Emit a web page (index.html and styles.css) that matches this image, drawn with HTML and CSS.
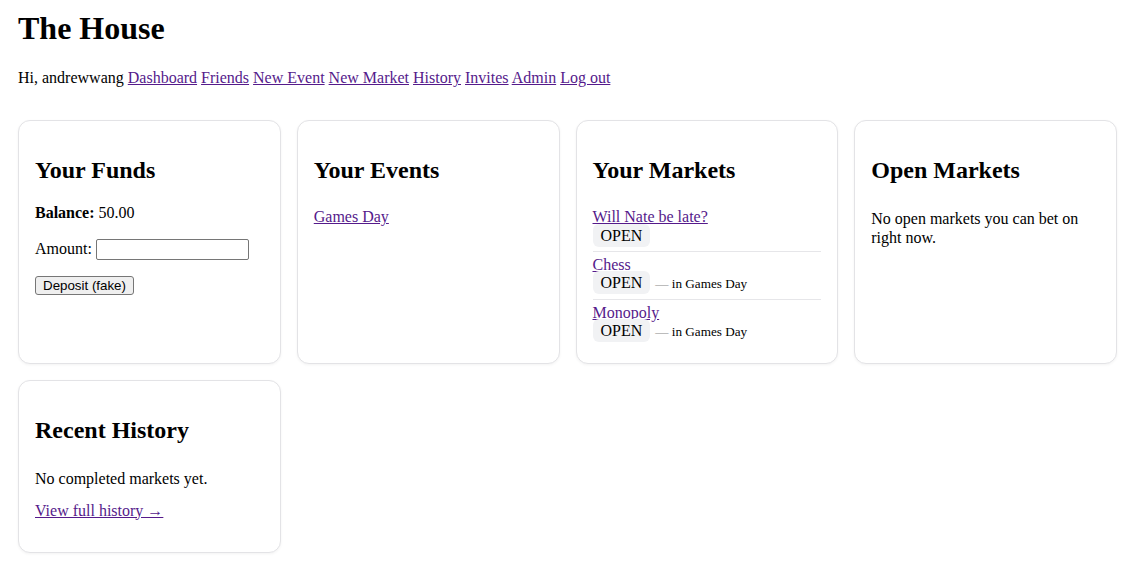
FILE: index.html
```html
<!DOCTYPE html>
<html lang="en">
<head>
<meta charset="utf-8">
<title>The House</title>
<link rel="stylesheet" href="styles.css">
</head>
<body>
<header class="site-header">
  <h1 class="site-title">The House</h1>
  <p class="nav">Hi, andrewwang <a href="#">Dashboard</a> <a href="#">Friends</a> <a href="#">New Event</a> <a href="#">New Market</a> <a href="#">History</a> <a href="#">Invites</a> <a href="#">Admin</a> <a href="#">Log out</a></p>
</header>
<main class="grid">
  <section class="card">
    <h2>Your Funds</h2>
    <p><strong>Balance:</strong> 50.00</p>
    <p>Amount: <input class="amount" type="text"></p>
    <p><button class="btn" type="button">Deposit (fake)</button></p>
  </section>
  <section class="card">
    <h2>Your Events</h2>
    <ul class="list">
      <li><a href="#">Games Day</a></li>
    </ul>
  </section>
  <section class="card">
    <h2>Your Markets</h2>
    <ul class="list">
      <li><a href="#">Will Nate be late?</a><br><span class="badge">OPEN</span></li>
      <li><a href="#">Chess</a><br><span class="badge">OPEN</span> <small class="meta"><span class="dash">—</span> in Games Day</small></li>
      <li><a href="#">Monopoly</a><br><span class="badge">OPEN</span> <small class="meta"><span class="dash">—</span> in Games Day</small></li>
    </ul>
  </section>
  <section class="card">
    <h2>Open Markets</h2>
    <p class="empty">No open markets you can bet on right now.</p>
  </section>
  <section class="card">
    <h2>Recent History</h2>
    <p class="empty">No completed markets yet.</p>
    <p class="more"><a href="#">View full history →</a></p>
  </section>
</main>
</body>
</html>
```
FILE: styles.css
```css
html, body {
  background: #fff;
}
body {
  margin: 0;
  padding: 10px 11px 14px 18px;
  font-family: "Liberation Serif", "Times New Roman", serif;
  font-size: 16px;
  line-height: 1.15;
  color: #000;
}
a {
  color: #551a8b;
}
.site-title {
  font-size: 32px;
  font-weight: bold;
  margin: 0 0 22.4px;
}
.nav {
  margin: 0;
}
.grid {
  display: grid;
  grid-template-columns: repeat(4, 1fr);
  gap: 16px;
  margin-top: 32px;
}
.card {
  border: 1px solid #e3e3e6;
  border-radius: 12px;
  padding: 16px;
  box-shadow: 0 1px 3px rgba(0, 0, 0, 0.05);
  background: #fff;
}
.card h2 {
  font-size: 24px;
  font-weight: bold;
  margin: 20px 0;
}
.card p {
  margin: 16px 0;
}
.list {
  list-style: none;
  margin: 0;
  padding: 0;
}
.list li {
  padding: 4px 0 6px;
  border-bottom: 1px solid #e6e6e9;
}
.list li:last-child {
  border-bottom: none;
}
.badge {
  background: #f1f2f4;
  border-radius: 6px;
  padding: 3px 8px;
}
.meta {
  font-size: 13.2px;
  margin-left: 1px;
}
.dash {
  color: #888;
}
.card p.empty {
  margin: 0;
  padding-top: 6px;
}
.card p.more {
  margin: 13px 0 16px;
}
.amount {
  box-sizing: border-box;
  width: 153px;
  height: 21px;
  padding: 1px 3px;
  border: 1px solid #767676;
  border-radius: 2px;
  font-family: "Liberation Sans", Arial, sans-serif;
  font-size: 13.33px;
  vertical-align: baseline;
}
.btn {
  font-family: "Liberation Sans", Arial, sans-serif;
  font-size: 13.33px;
  line-height: normal;
  padding: 1px 7px;
  background: #efefef;
  border: 1px solid #767676;
  border-radius: 3px;
  color: #000;
}
```
